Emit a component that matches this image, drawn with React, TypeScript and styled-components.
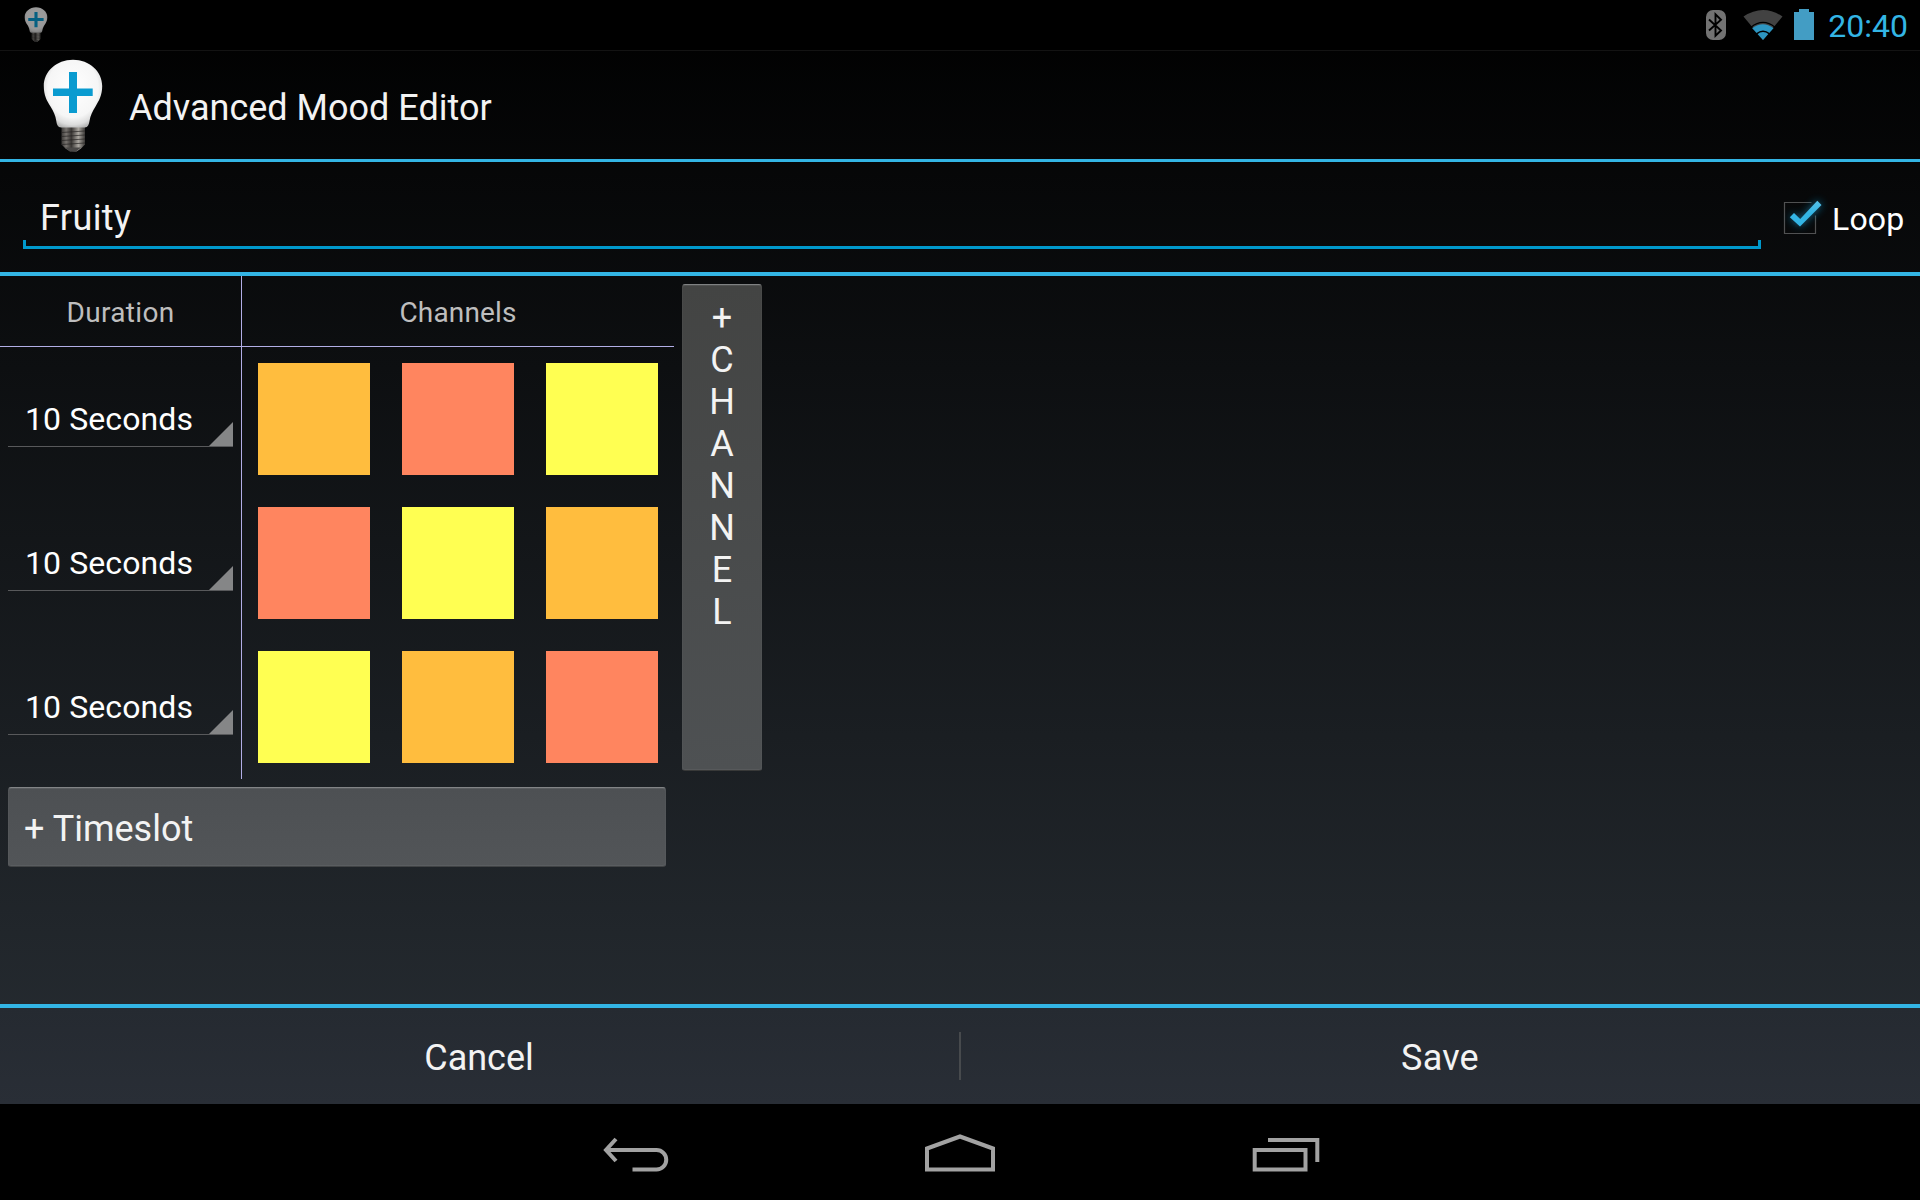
import React from 'react';
import styled, { createGlobalStyle } from 'styled-components';

const HOLO = '#33b5e5';
const RULE = '#b2aee6';

const GlobalStyle = createGlobalStyle`
  * { box-sizing: border-box; }
  html, body { margin: 0; padding: 0; background: #000; }
  body { font-family: Roboto, "Liberation Sans", sans-serif; color: #f3f3f3; overflow: hidden; }
`;

const Screen = styled.div`
  width: 1920px;
  height: 1200px;
  display: flex;
  flex-direction: column;
  background: linear-gradient(to bottom, #000 0, #272d33 1104px);
`;

const Label = styled.span<{ $size?: number; $track?: number; $color?: string; $drop?: number }>`
  display: block;
  font-size: ${p => p.$size ?? 36}px;
  line-height: 42px;
  letter-spacing: ${p => p.$track ?? 0}px;
  color: ${p => p.$color ?? '#f3f3f3'};
  margin-top: ${p => p.$drop ?? 0}px;
  white-space: pre;
`;

const StatusBar = styled.header`
  height: 51px;
  flex: none;
  display: flex;
  align-items: flex-start;
  justify-content: space-between;
  background: #000;
  border-bottom: 1px solid #131313;
  padding: 0 12px 0 24px;
`;

const StatusIcons = styled.div`
  display: flex;
  align-items: flex-start;
`;

const ActionBar = styled.div`
  height: 111px;
  flex: none;
  display: flex;
  align-items: flex-start;
  padding: 8px 0 0 42px;
  gap: 25px;
  border-bottom: 3px solid ${HOLO};
`;

const NameRow = styled.div`
  height: 114px;
  flex: none;
  display: flex;
  border-bottom: 4px solid ${HOLO};
  padding-left: 23px;
`;

const NameField = styled.div`
  width: 1738px;
  height: 87px;
  display: flex;
  flex-direction: column;
  justify-content: space-between;
  padding-top: 35px;
`;

const NameText = styled.div`
  padding-left: 17px;
`;

const FieldBracket = styled.div`
  height: 9px;
  margin-top: -9px;
  border: 3px solid #0099cc;
  border-top: none;
`;

const LoopToggle = styled.label`
  display: flex;
  align-items: flex-start;
  padding: 28px 0 0 13px;
`;

const LoopText = styled.div`
  margin-left: -2px;
`;

const Content = styled.main`
  flex: 1;
  display: flex;
  align-items: flex-start;
`;

const GridColumn = styled.div`
  width: 674px;
`;

const TableRow = styled.div<{ $head?: boolean }>`
  display: flex;
  height: ${p => (p.$head ? 71 : 144)}px;
  border-bottom: ${p => (p.$head ? `1px solid ${RULE}` : 'none')};
`;

const DurationCell = styled.div`
  width: 242px;
  border-right: 1px solid ${RULE};
  display: flex;
  align-items: center;
  justify-content: center;
`;

const ChannelsHead = styled.div`
  flex: 1;
  display: flex;
  align-items: center;
  justify-content: center;
`;

const Spinner = styled.div`
  width: 225px;
  height: 56px;
  display: flex;
  justify-content: space-between;
  align-items: flex-end;
  border-bottom: 1px solid #58595b;
  padding-left: 17px;
`;

const SpinnerText = styled.div`
  padding-bottom: 6px;
`;

const SpinnerCorner = styled.div`
  width: 24px;
  height: 24px;
  background: #858687;
  clip-path: polygon(100% 0, 100% 100%, 0 100%);
`;

const SwatchCell = styled.div`
  width: 144px;
  padding: 16px;
`;

const Swatch = styled.div<{ $color: string }>`
  width: 112px;
  height: 112px;
  background: ${p => p.$color};
`;

const HoloButton = styled.button<{ $tall?: boolean }>`
  display: flex;
  flex-direction: ${p => (p.$tall ? 'column' : 'row')};
  align-items: center;
  width: ${p => (p.$tall ? 80 : 658)}px;
  height: ${p => (p.$tall ? 487 : 80)}px;
  margin: 8px;
  padding: ${p => (p.$tall ? '12px 0 0' : '0 0 0 15px')};
  font: inherit;
  border: 1px solid rgba(255, 255, 255, 0.03);
  border-top: 1px solid rgba(255, 255, 255, 0.28);
  border-bottom: 1px solid rgba(0, 0, 0, 0.16);
  border-radius: 3px;
  background: ${p =>
    p.$tall ? 'linear-gradient(#434443, #4e5153)' : 'linear-gradient(#4d5053, #525558)'};
  box-shadow: inset 0 1px rgba(255, 255, 255, 0.08), inset 0 -1px rgba(255, 255, 255, 0.05);
`;

const ButtonBar = styled.footer`
  height: 100px;
  flex: none;
  display: flex;
  align-items: stretch;
  border-top: 4px solid ${HOLO};
  background: linear-gradient(#252a31, #292e36);
`;

const BarButton = styled.div`
  flex: 1;
  display: flex;
  align-items: center;
  justify-content: center;
  padding-right: 1px;
`;

const Divider = styled.div`
  width: 2px;
  height: 48px;
  margin-top: 24px;
  background: #474a4d;
`;

const NavBar = styled.nav`
  height: 96px;
  flex: none;
  display: flex;
  justify-content: center;
  background: #000;
`;

const NavIcon = styled.svg`
  width: 324px;
  height: 96px;
  fill: none;
  stroke: #a2a2a2;
  stroke-width: 4;
`;

const Glyph = styled.svg<{ $ml?: number; $dim?: boolean }>`
  display: block;
  flex: none;
  overflow: visible;
  margin-left: ${p => p.$ml ?? 0}px;
  opacity: ${p => (p.$dim ? 0.62 : 1)};
`;

const StatusBulb = styled.div`
  padding-top: 7px;
`;

function Bulb({ id, width, height, dim }: { id: string; width: number; height: number; dim?: boolean }) {
  return (
    <Glyph width={width} height={height} viewBox="0 0 62 96" preserveAspectRatio="none" $dim={dim}>
      <defs>
        <radialGradient id={`${id}g`} cx="0.5" cy="0.42" r="0.6">
          <stop offset="0" stopColor="#fff" />
          <stop offset="0.72" stopColor="#f6f6f6" />
          <stop offset="0.9" stopColor="#dcdcdc" />
          <stop offset="1" stopColor="#b5b5b5" />
        </radialGradient>
        <linearGradient id={`${id}b`}>
          <stop offset="0" stopColor="#3c3a38" />
          <stop offset="0.2" stopColor="#77736f" />
          <stop offset="0.42" stopColor="#393634" />
          <stop offset="0.72" stopColor="#aaa6a0" />
          <stop offset="1" stopColor="#3b3937" />
        </linearGradient>
      </defs>
      <path d="M19.500 67H43v18.500l-4 4-4.500 3H28l-4.500-3-4-4z" fill={`url(#${id}b)`} />
      <path d="M19.500 73.500l23.500-1.500M19.500 77.500l23.500-1.500M19.500 81.500l23.500-1.500M20 85.500l23-1.500" stroke="#22201f" strokeWidth="1.200" opacity="0.65" />
      <path d="M23 88.500h16l-5 4h-6z" fill="#4a4847" />
      <path
        d="M31 0.800C14.500 0.800 1.800 12.500 1.800 27c0 9.500 3 14.500 6.700 20.500 3 5 5 9 5.800 14.500.5 3.500 1.400 6.500 5 6.500h23.400c3.300 0 4.200-3 4.800-6.500.9-5.500 3-9.500 6-14.500C57 41.500 60.200 36.500 60.200 27 60.200 12.500 47.500 0.800 31 0.800z"
        fill={`url(#${id}g)`}
      />
      <path d="M27 13h8v16.600h15.700V37H35v17h-8V37H11v-7.400h16z" fill="#0a9bd0" />
    </Glyph>
  );
}

function Bluetooth() {
  return (
    <Glyph width="22" height="51" viewBox="0 0 22 51">
      <rect x="1" y="10" width="20" height="30" rx="7" fill="#727272" />
      <path d="M4 19.500l12 11-5.500 5.300v-21.500l5.500 5.500-12 10.700" fill="none" stroke="#000" strokeWidth="1.900" />
    </Glyph>
  );
}

function Wifi() {
  return (
    <Glyph width="40" height="51" viewBox="0 0 40 51" $ml={16}>
      <path d="M0.500 16.500Q20 3.500 39.500 16.500L20 40z" fill="#424242" />
      <path d="M9.200 28.200Q20 20.500 30.500 28.200L20 40z" fill="#2d96c2" />
      <path d="M8 28.500Q20 19 32 28.500" fill="none" stroke="#000" strokeWidth="1.300" transform="translate(0 -1.300)" />
      <path d="M13.500 33.800Q20 28.500 26.500 33.800" fill="none" stroke="#000" strokeWidth="1.500" />
    </Glyph>
  );
}

function Battery() {
  return (
    <Glyph width="20" height="51" viewBox="0 0 20 51" $ml={11}>
      <path d="M0 12h5V9h10v3h5v28H0z" fill="#439dc4" />
    </Glyph>
  );
}

const ClockSlot = styled.div`
  padding: 5px 0 0 14px;
`;

function CheckMark() {
  return (
    <Glyph width="60" height="60" viewBox="0 0 60 60">
      <defs>
        <filter id="glow" x="-60%" y="-60%" width="220%" height="220%">
          <feGaussianBlur stdDeviation="4.200" />
        </filter>
        <linearGradient id="tick" x1="0" y1="0" x2="0" y2="1">
          <stop offset="0" stopColor="#56bfe6" />
          <stop offset="0.500" stopColor="#33b5e5" />
        </linearGradient>
      </defs>
      <path d="M37.500 12.500H10.500v31h31V25.500" fill="none" stroke="#505152" strokeWidth="1.200" />
      <path d="M16 27.500l3.500-3.500 6.500 6L43.500 11l4 4L26 36z" fill="#1aa0d8" opacity="0.75" filter="url(#glow)" />
      <path d="M15.800 27.300l4.200-4.200 6.200 6L43.300 10.800l4.200 4.200L26 36.400z" fill="url(#tick)" />
    </Glyph>
  );
}

const O = '#ffbd3e';
const R = '#ff855f';
const Y = '#ffff52';

const timeslots = [
  { duration: '10 Seconds', colors: [O, R, Y] },
  { duration: '10 Seconds', colors: [R, Y, O] },
  { duration: '10 Seconds', colors: [Y, O, R] },
];

export default function App() {
  return (
    <Screen>
      <GlobalStyle />
      <StatusBar>
        <StatusBulb>
          <Bulb id="s" width={24} height={36} dim />
        </StatusBulb>
        <StatusIcons>
          <Bluetooth />
          <Wifi />
          <Battery />
          <ClockSlot>
            <Label $size={32} $color={HOLO}>20:40</Label>
          </ClockSlot>
        </StatusIcons>
      </StatusBar>

      <ActionBar>
        <Bulb id="m" width={62} height={96} />
        <Label $drop={28}>Advanced Mood Editor</Label>
      </ActionBar>

      <NameRow>
        <NameField>
          <NameText><Label $track={0.4}>Fruity</Label></NameText>
          <FieldBracket />
        </NameField>
        <LoopToggle>
          <CheckMark />
          <LoopText><Label $size={32} $drop={8} $track={0.15} $color="#fff">Loop</Label></LoopText>
        </LoopToggle>
      </NameRow>

      <Content>
        <GridColumn>
          <TableRow $head>
            <DurationCell><Label $size={28} $drop={4} $track={0.35} $color="#bebebe">Duration</Label></DurationCell>
            <ChannelsHead><Label $size={28} $drop={4} $track={0.15} $color="#bebebe">Channels</Label></ChannelsHead>
          </TableRow>
          {timeslots.map((slot, i) => (
            <TableRow key={i}>
              <DurationCell>
                <Spinner>
                  <SpinnerText><Label $size={32} $track={0.1} $color="#fff">{slot.duration}</Label></SpinnerText>
                  <SpinnerCorner />
                </Spinner>
              </DurationCell>
              {slot.colors.map((color, j) => (
                <SwatchCell key={j}><Swatch $color={color} /></SwatchCell>
              ))}
            </TableRow>
          ))}
          <HoloButton>
            <Label $drop={3}>+ Timeslot</Label>
          </HoloButton>
        </GridColumn>
        <HoloButton $tall>
          {'+CHANNEL'.split('').map((letter, i) => (
            <Label key={i}>{letter}</Label>
          ))}
        </HoloButton>
      </Content>

      <ButtonBar>
        <BarButton><Label $drop={3}>Cancel</Label></BarButton>
        <Divider />
        <BarButton><Label $drop={3} $track={0.2}>Save</Label></BarButton>
      </ButtonBar>

      <NavBar>
        <NavIcon viewBox="474 0 324 96">
          <path d="M616 35L606 46L616 57M606 46H656.500a9.700 9.700 0 0 1 0 19.500H632.500" />
        </NavIcon>
        <NavIcon viewBox="798 0 324 96">
          <path d="M927 65.500V44.500L960 32.500L993 44.500V65.500z" />
        </NavIcon>
        <NavIcon viewBox="1122 0 324 96">
          <path d="M1254.700 46H1305.500V65.500H1254.700zM1268 36H1317.300V58" />
        </NavIcon>
      </NavBar>
    </Screen>
  );
}
